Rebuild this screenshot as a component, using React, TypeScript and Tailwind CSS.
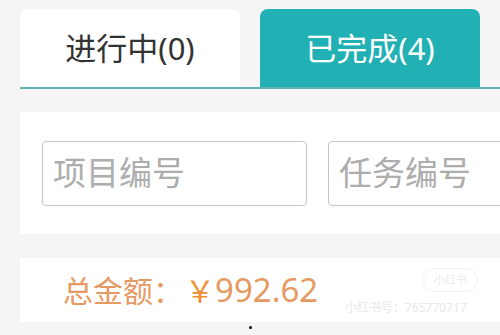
import React from "react";

const font = { fontFamily: '"Noto Sans", "Noto Sans CJK SC", sans-serif' };

export default function App() {
  return (
    <div
      className="relative w-[500px] h-[335px] overflow-hidden bg-[#f5f5f5]"
      style={font}
    >
      {/* tabs */}
      <div className="pt-[9px] pl-5">
        <div className="flex gap-5 border-b-2 border-[#5fb3b5]">
          <div className="w-[220px] h-[78px] rounded-t-lg bg-white flex items-center justify-center text-[31px] text-[#333]">
            进行中(0)
          </div>
          <div className="w-[220px] h-[78px] rounded-t-lg bg-[#21b1b5] flex items-center justify-center text-[31px] text-white">
            已完成(4)
          </div>
        </div>
      </div>

      {/* search */}
      <div className="mt-[23px] ml-5 h-[122px] bg-white flex items-center gap-[21px] pl-[22px]">
        <div className="shrink-0 w-[265px] h-[65px] border border-[#c4c4c4] rounded-sm flex items-center pl-[10px] text-[33px] text-[#adadad]">
          项目编号
        </div>
        <div className="shrink-0 w-[265px] h-[65px] border border-[#c4c4c4] rounded-sm flex items-center pl-[10px] text-[33px] text-[#adadad]">
          任务编号
        </div>
      </div>

      {/* total */}
      <div className="mt-6 ml-5 h-[64px] bg-white flex items-center pl-[43px] text-[#e69a63]">
        <span className="text-[30px]">总金额：</span>
        <span className="text-[30px] text-[#ef8f2e] ml-[2px]">￥</span>
        <span className="text-[33px]">992.62</span>
      </div>

      <div className="flex justify-center pt-[4px]">
        <div className="w-[3px] h-[3px] rounded-full bg-black" />
      </div>

      {/* watermark */}
      <div className="absolute left-[423px] top-[268px] w-[55px] h-[24px] rounded-full border border-[#f0f0f0] flex items-center justify-center text-[11px] text-[#ebebeb]">
        小红书
      </div>
      <div className="absolute left-[345px] top-[299px] text-[12px] text-[#e8e8e8]">
        小红书号：765770717
      </div>
    </div>
  );
}
